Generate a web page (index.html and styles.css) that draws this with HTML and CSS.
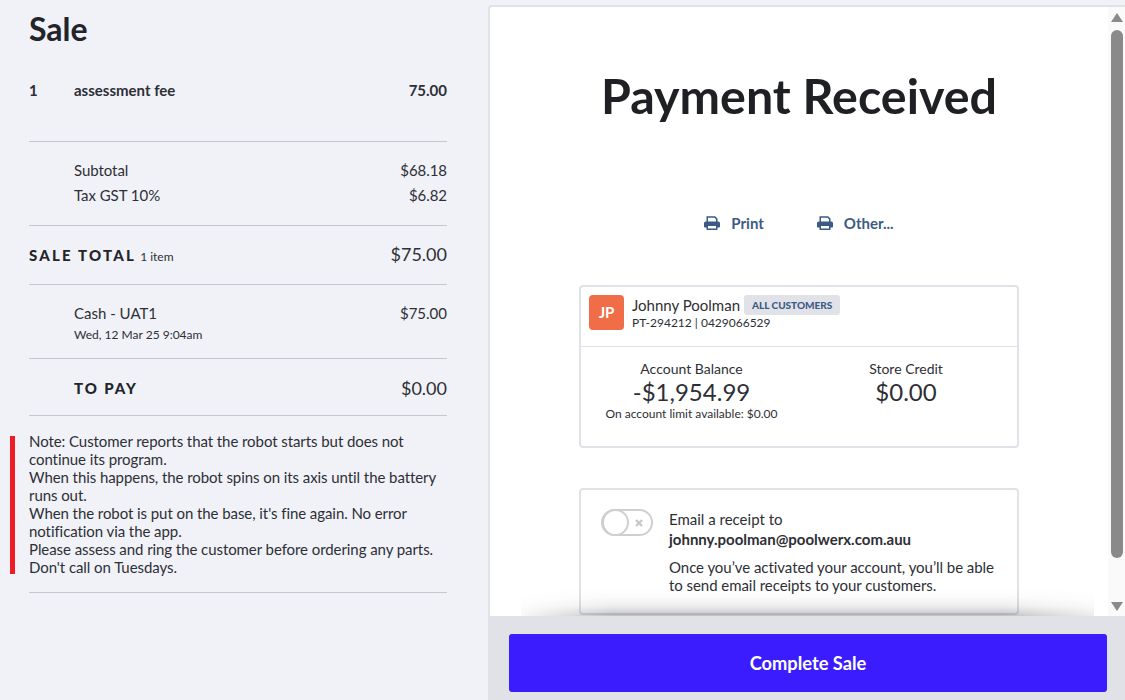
FILE: index.html
```html
<!DOCTYPE html>
<html lang="en">
<head>
<meta charset="utf-8">
<title>Payment Received</title>
<link rel="stylesheet" href="styles.css">
</head>
<body>
<div class="page">
  <aside class="sale">
    <h2 class="sale-title">Sale</h2>
    <div class="line-item">
      <span class="qty">1</span>
      <span class="item-name">assessment fee</span>
      <span class="item-price">75.00</span>
    </div>
    <div class="totals indented">
      <div class="row"><span>Subtotal</span><span>$68.18</span></div>
      <div class="row"><span>Tax GST 10%</span><span>$6.82</span></div>
    </div>
    <div class="total-row">
      <span><strong class="caps">SALE TOTAL</strong> <small class="count">1 item</small></span>
      <span class="amount">$75.00</span>
    </div>
    <div class="payment indented">
      <div class="row"><span>Cash - UAT1</span><span>$75.00</span></div>
      <div class="pay-date">Wed, 12 Mar 25 9:04am</div>
    </div>
    <div class="pay-row indented">
      <strong class="caps">TO PAY</strong>
      <span class="amount">$0.00</span>
    </div>
    <div class="note-wrap">
      <p class="note">Note: Customer reports that the robot starts but does not continue its program.<br>When this happens, the robot spins on its axis until the battery runs out.<br>When the robot is put on the base, it's fine again. No error notification via the app.<br>Please assess and ring the customer before ordering any parts.<br>Don't call on Tuesdays.</p>
    </div>
  </aside>
  <main class="receipt">
    <div class="scroller">
      <div class="content">
        <h1 class="heading">Payment Received</h1>
        <div class="actions">
          <a class="action">
            <svg class="printer" viewBox="0 0 16 14"><path d="M2.5 0.2h8.6l2.4 2.4V6H12V3.3L10.4 1.7H4V6H2.5z"/><path d="M1.8 5.5h12.4A1.7 1.7 0 0 1 16 7.2v3.6a.6.6 0 0 1-.6.6H13.5V14h-11v-2.6H.6a.6.6 0 0 1-.6-.6V7.2a1.7 1.7 0 0 1 1.8-1.7zM4 10v2.5h8V10z" fill-rule="evenodd"/></svg>
            Print
          </a>
          <a class="action">
            <svg class="printer" viewBox="0 0 16 14"><path d="M2.5 0.2h8.6l2.4 2.4V6H12V3.3L10.4 1.7H4V6H2.5z"/><path d="M1.8 5.5h12.4A1.7 1.7 0 0 1 16 7.2v3.6a.6.6 0 0 1-.6.6H13.5V14h-11v-2.6H.6a.6.6 0 0 1-.6-.6V7.2a1.7 1.7 0 0 1 1.8-1.7zM4 10v2.5h8V10z" fill-rule="evenodd"/></svg>
            Other...
          </a>
        </div>
        <section class="card customer">
          <div class="cust-head">
            <div class="avatar">JP</div>
            <div class="cust-info">
              <div class="cust-line"><span class="cust-name">Johnny Poolman</span><span class="badge">ALL CUSTOMERS</span></div>
              <div class="cust-meta">PT-294212 | 0429066529</div>
            </div>
          </div>
          <div class="balances">
            <div class="bal">
              <div class="bal-label">Account Balance</div>
              <div class="bal-value">-$1,954.99</div>
              <div class="bal-sub">On account limit available: $0.00</div>
            </div>
            <div class="bal">
              <div class="bal-label">Store Credit</div>
              <div class="bal-value">$0.00</div>
            </div>
          </div>
        </section>
        <section class="card email">
          <div class="toggle">
            <span class="knob"></span>
            <svg class="cross" viewBox="0 0 8 8"><path d="M1 1l6 6M7 1l-6 6"/></svg>
          </div>
          <div class="email-text">
            <div>Email a receipt to</div>
            <div class="email-addr">johnny.poolman@poolwerx.com.auu</div>
            <p class="email-note">Once you’ve activated your account, you’ll be able to send email receipts to your customers.</p>
          </div>
        </section>
      </div>
      <div class="scrollbar">
        <span class="arrow up"></span>
        <span class="track"><span class="thumb"></span></span>
        <span class="arrow down"></span>
      </div>
      <div class="fade"></div>
    </div>
    <footer class="footer">
      <button class="complete">Complete Sale</button>
    </footer>
  </main>
</div>
</body>
</html>
```
FILE: styles.css
```css
* { box-sizing: border-box; }
html, body { margin: 0; height: 700px; overflow: hidden; }
body { font-family: Lato, "Open Sans", sans-serif; color: #2e2f35; background: #f0f2f8; }
.page { display: flex; height: 700px; }

.sale { width: 487px; flex: none; padding: 0 40px 0 29px; background: #f0f2f8; }
.sale-title { margin: 0; padding-top: 10px; height: 80px; font-size: 32px; line-height: 38px; font-weight: 700; color: #22242a; }
.line-item { display: flex; height: 62px; font-size: 15px; line-height: 21px; font-weight: 700; border-bottom: 1px solid #c7c8cf; }
.qty { width: 45px; }
.item-name { flex: 1; }
.indented { padding-left: 45px; }
.row { display: flex; justify-content: space-between; }
.totals { height: 84px; padding-top: 16px; font-size: 15px; line-height: 25px; letter-spacing: -0.05px; border-bottom: 1px solid #c7c8cf; }
.total-row { display: flex; justify-content: space-between; align-items: center; height: 59px; padding-bottom: 2px; border-bottom: 1px solid #c7c8cf; }
.caps { font-size: 15px; font-weight: 900; letter-spacing: 2.2px; color: #22242a; }
.count { font-size: 12px; font-weight: 400; }
.amount { font-size: 18px; }
.payment { height: 74px; padding-top: 16px; font-size: 15px; line-height: 25px; border-bottom: 1px solid #c7c8cf; }
.pay-date { font-size: 12px; line-height: 18px; }
.pay-row { display: flex; justify-content: space-between; align-items: center; height: 57px; padding-top: 1px; border-bottom: 1px solid #c7c8cf; }
.pay-row .caps { letter-spacing: 1.9px; }
.note-wrap { position: relative; margin-top: 16px; margin-left: -19px; padding-left: 19px; }
.note-wrap::before { content: ""; position: absolute; left: 0; top: 4px; width: 5px; height: 138px; background: #ee1c25; }
.note { margin: 0; padding-bottom: 16px; font-size: 15px; line-height: 18px; letter-spacing: -0.07px; border-bottom: 1px solid #c7c8cf; }

.receipt { flex: 1; display: flex; flex-direction: column; margin-left: 1px; padding-top: 5px; }
.scroller { position: relative; flex: 1; display: flex; min-height: 0; background: #fff; overflow: hidden; border: solid #e1e2e8; border-width: 2px 0 0 2px; border-top-left-radius: 4px; }
.content { flex: 1; min-width: 0; padding: 0 89px 0 89px; overflow: hidden; }
.heading { margin: -2px 0 0; padding-top: 62px; height: 185px; text-align: center; font-size: 48.4px; line-height: 56px; font-weight: 700; color: #1f2024; }
.actions { display: flex; justify-content: center; gap: 53px; height: 95px; padding-top: 24px; font-size: 15px; line-height: 18px; font-weight: 700; color: #3b5b85; }
.action { display: flex; align-items: center; gap: 11px; height: 18px; }
.printer { width: 16px; height: 14px; fill: #3b5b85; }
.card { width: 440px; border: 2px solid #e1e2e8; border-radius: 4px; background: #fff; }
.customer { height: 163px; margin-bottom: 40px; }
.cust-head { display: flex; gap: 8px; height: 60px; padding: 8px; border-bottom: 1px solid #e1e2e8; }
.avatar { width: 35px; height: 35px; flex: none; border-radius: 4px; background: #f06d47; color: #fff; font-weight: 700; font-size: 15px; line-height: 35px; text-align: center; }
.cust-line { display: flex; align-items: center; gap: 4px; height: 20px; }
.cust-name { font-size: 15px; }
.badge { height: 20px; padding: 0 8px; border-radius: 3px; background: #e1e2e8; color: #3b5b85; font-size: 10px; line-height: 20px; font-weight: 900; }
.cust-meta { font-size: 12px; line-height: 15px; }
.balances { display: flex; padding-top: 13px; padding-left: 19px; }
.bal { text-align: center; white-space: nowrap; }
.bal:first-child { width: 183px; }
.bal:last-child { width: 176px; margin-left: 35px; }
.bal-label { font-size: 14px; line-height: 17px; }
.bal-value { font-size: 24px; line-height: 29px; }
.bal-sub { font-size: 12px; line-height: 16px; }
.email { display: flex; gap: 16px; height: 127px; padding: 19px 20px; font-size: 15px; line-height: 20px; }
.toggle { position: relative; display: flex; align-items: center; justify-content: flex-end; width: 52px; height: 27px; flex: none; border: 2px solid #cfcfcf; border-radius: 14px; padding-right: 8px; }
.knob { position: absolute; left: -1px; top: -2px; width: 27px; height: 27px; border: 2px solid #cfcfcf; border-radius: 50%; background: #fff; }
.cross { width: 8px; height: 8px; fill: none; stroke: #c8c8c8; stroke-width: 2.4; }
.email-addr { font-weight: 700; }
.email-note { margin: 9px 0 0; line-height: 18px; letter-spacing: -0.05px; }

.scrollbar { width: 17px; flex: none; display: flex; flex-direction: column; align-items: center; background: #fafafa; }
.arrow { width: 0; height: 0; border-left: 6px solid transparent; border-right: 6px solid transparent; }
.arrow.up { border-bottom: 9px solid #8a8a8a; margin: 6px 0 8px; }
.arrow.down { border-top: 9px solid #8a8a8a; margin: 5px 0 5px; }
.track { flex: 1; width: 12px; }
.thumb { display: block; width: 12px; height: 528px; border-radius: 6px; background: #8a8a8a; }
.fade { position: absolute; left: 31px; right: 31px; bottom: 0; height: 28px; pointer-events: none; background: linear-gradient(to bottom, rgba(0,0,0,0), rgba(0,0,0,.02) 35%, rgba(0,0,0,.07) 65%, rgba(0,0,0,.24)); -webkit-mask-image: linear-gradient(to right, rgba(0,0,0,.12), #000 90px, #000 calc(100% - 90px), rgba(0,0,0,.3)); mask-image: linear-gradient(to right, rgba(0,0,0,.12), #000 90px, #000 calc(100% - 90px), rgba(0,0,0,.3)); }

.footer { height: 84px; flex: none; padding: 18px 18px 8px 21px; background: #e1e2e8; }
.complete { display: block; width: 598px; height: 58px; border: 0; border-radius: 3px; background: #3b1cff; color: #fff; font-family: inherit; font-size: 18.3px; font-weight: 700; }
```
